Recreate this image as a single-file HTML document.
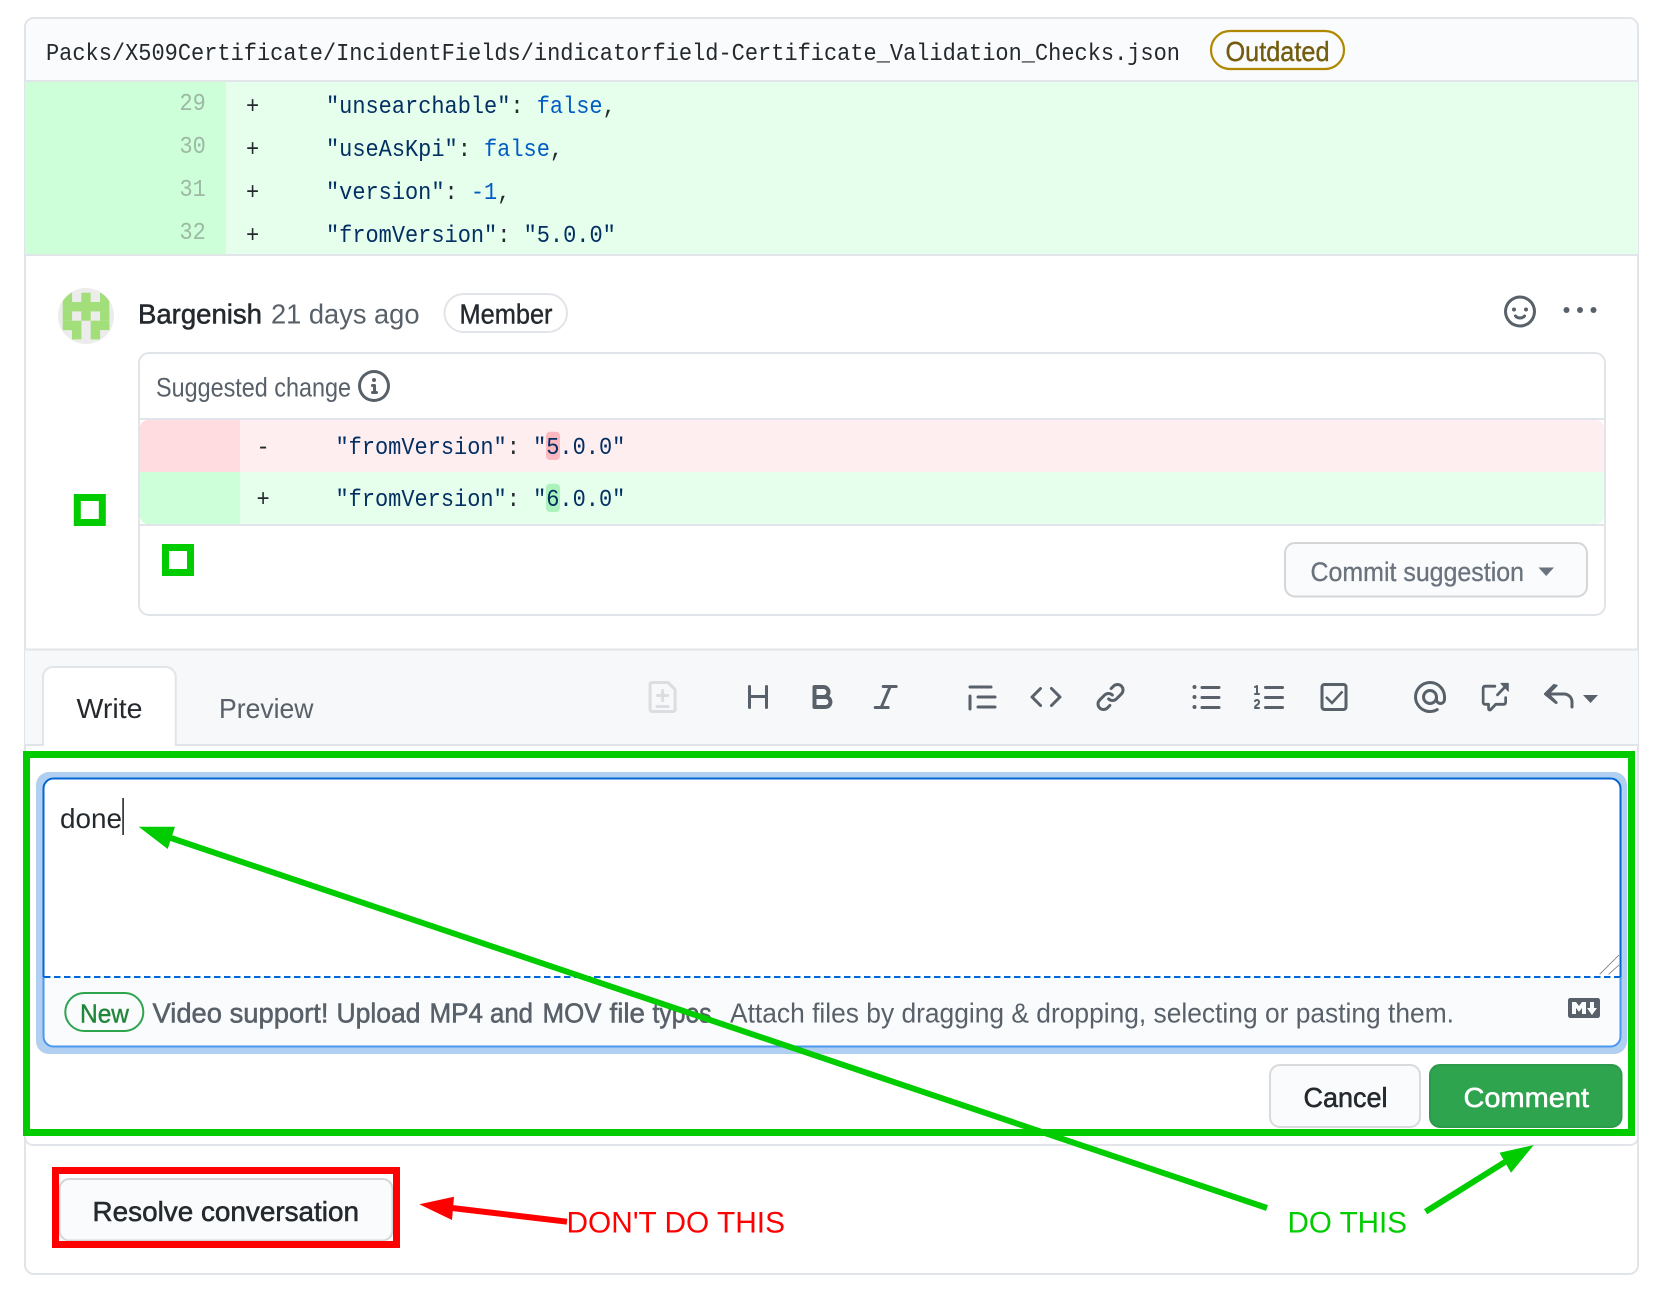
<!DOCTYPE html>
<html lang="en"><head><meta charset="utf-8"><title>Review comment</title>
<style>
html,body{margin:0;padding:0;background:#fff;width:1654px;height:1289px;overflow:hidden}
svg{display:block}
text{font-family:"Liberation Sans",Arial,sans-serif;font-size:28px;white-space:pre}
.m{font-family:"Liberation Mono",monospace;font-size:24px}
.k{fill:#032f62}.p{fill:#24292e}.b{fill:#005cc5}.n{fill:#9db8a4}
.s{stroke-width:.55px;paint-order:stroke}
</style></head><body>
<svg xmlns="http://www.w3.org/2000/svg" width="1654" height="1289" viewBox="0 0 1654 1289">
<rect width="1654" height="1289" fill="#fff"/>
<!-- outer card -->
<rect x="25" y="18" width="1613" height="1256" rx="9" fill="#fff" stroke="#e1e4e8" stroke-width="2"/>
<path d="M26 81V27a8 8 0 0 1 8-8H1629a8 8 0 0 1 8 8V81z" fill="#fafbfc"/>
<rect x="25" y="80" width="1613" height="2" fill="#e1e4e8"/>
<text class="m p" x="46" y="60" textLength="1134" lengthAdjust="spacingAndGlyphs">Packs/X509Certificate/IncidentFields/indicatorfield-Certificate_Validation_Checks.json</text>
<rect x="1211" y="31" width="133" height="38" rx="19" fill="none" stroke="#b08800" stroke-width="2.2"/>
<text class="s" x="1225.5" y="61" textLength="104" lengthAdjust="spacingAndGlyphs" fill="#735c0f" stroke="#735c0f" style="stroke-width:.4px">Outdated</text>

<!-- green code rows -->
<rect x="25" y="82" width="201" height="172" fill="#cdffd8"/>
<rect x="226" y="82" width="1412" height="172" fill="#e6ffed"/>
<rect x="25" y="254" width="1613" height="2" fill="#e1e4e8"/>
<text class="m n" x="179.500" y="110" textLength="26.3" lengthAdjust="spacingAndGlyphs">29</text>
<text class="m n" x="179.500" y="153" textLength="26.3" lengthAdjust="spacingAndGlyphs">30</text>
<text class="m n" x="179.500" y="196" textLength="26.3" lengthAdjust="spacingAndGlyphs">31</text>
<text class="m n" x="179.500" y="239" textLength="26.3" lengthAdjust="spacingAndGlyphs">32</text>
<text class="m p" x="246" y="113" textLength="13.2" lengthAdjust="spacingAndGlyphs">+</text>
<text class="m p" x="246" y="156" textLength="13.2" lengthAdjust="spacingAndGlyphs">+</text>
<text class="m p" x="246" y="199" textLength="13.2" lengthAdjust="spacingAndGlyphs">+</text>
<text class="m p" x="246" y="242" textLength="13.2" lengthAdjust="spacingAndGlyphs">+</text>
<text class="m k" x="326" y="113" textLength="184.4" lengthAdjust="spacingAndGlyphs">"unsearchable"</text>
<text class="m p" x="510.400" y="113" textLength="13.2" lengthAdjust="spacingAndGlyphs">:</text>
<text class="m b" x="536.700" y="113" textLength="65.9" lengthAdjust="spacingAndGlyphs">false</text>
<text class="m p" x="602.600" y="113" textLength="13.2" lengthAdjust="spacingAndGlyphs">,</text>
<text class="m k" x="326" y="156" textLength="131.7" lengthAdjust="spacingAndGlyphs">"useAsKpi"</text>
<text class="m p" x="457.700" y="156" textLength="13.2" lengthAdjust="spacingAndGlyphs">:</text>
<text class="m b" x="484" y="156" textLength="65.9" lengthAdjust="spacingAndGlyphs">false</text>
<text class="m p" x="549.900" y="156" textLength="13.2" lengthAdjust="spacingAndGlyphs">,</text>
<text class="m k" x="326" y="199" textLength="118.5" lengthAdjust="spacingAndGlyphs">"version"</text>
<text class="m p" x="444.500" y="199" textLength="13.2" lengthAdjust="spacingAndGlyphs">:</text>
<text class="m b" x="470.900" y="199" textLength="26.3" lengthAdjust="spacingAndGlyphs">-1</text>
<text class="m p" x="497.200" y="199" textLength="13.2" lengthAdjust="spacingAndGlyphs">,</text>
<text class="m k" x="326" y="242" textLength="171.2" lengthAdjust="spacingAndGlyphs">"fromVersion"</text>
<text class="m p" x="497.200" y="242" textLength="13.2" lengthAdjust="spacingAndGlyphs">:</text>
<text class="m k" x="523.600" y="242" textLength="92.2" lengthAdjust="spacingAndGlyphs">"5.0.0"</text>

<!-- author row -->
<circle cx="86" cy="316" r="28" fill="#ececec"/>
<clipPath id="av"><circle cx="86" cy="316" r="27.5"/></clipPath>
<g clip-path="url(#av)" fill="#a2de7a">
<rect x="62.7" y="292.7" width="9.4" height="9.4"/><rect x="81.3" y="292.7" width="9.4" height="9.4"/><rect x="100" y="292.7" width="9.4" height="9.4"/>
<rect x="62.7" y="302" width="46.6" height="9.4"/>
<rect x="62.7" y="311.3" width="9.4" height="9.4"/><rect x="81.3" y="311.3" width="9.4" height="9.4"/><rect x="100" y="311.3" width="9.4" height="9.4"/>
<rect x="62.7" y="320.7" width="18.7" height="9.4"/><rect x="90.7" y="320.7" width="18.7" height="9.4"/>
<rect x="72" y="330" width="9.4" height="9.4"/><rect x="90.7" y="330" width="9.4" height="9.4"/>
</g>
<text class="s" x="138" y="323.700" textLength="124" lengthAdjust="spacingAndGlyphs" fill="#24292e" stroke="#24292e">Bargenish</text>
<text x="271" y="323.700" textLength="148.5" lengthAdjust="spacingAndGlyphs" fill="#586069">21 days ago</text>
<rect x="444.500" y="294" width="122.500" height="38" rx="19" fill="#fff" stroke="#e1e4e8" stroke-width="2"/>
<text class="s" x="459.500" y="323.700" textLength="93" lengthAdjust="spacingAndGlyphs" fill="#24292e" stroke="#24292e" style="stroke-width:.4px">Member</text>
<path transform="translate(1504 295.500) scale(2)" fill="#586069" fill-rule="evenodd" d="M1.5 8a6.5 6.5 0 1113 0 6.5 6.5 0 01-13 0zM8 0a8 8 0 100 16A8 8 0 008 0zM5 8a1 1 0 100-2 1 1 0 000 2zm7-1a1 1 0 11-2 0 1 1 0 012 0zM5.32 9.636a.75.75 0 011.038.175l.007.009c.103.118.22.222.35.31.264.178.683.37 1.285.37.602 0 1.02-.192 1.285-.371.13-.088.247-.192.35-.31l.007-.008a.75.75 0 111.222.87l-.614-.431c.614.43.614.431.613.431v.001l-.001.002-.002.003-.005.007-.014.019a1.984 1.984 0 01-.184.213c-.16.166-.338.316-.53.445-.63.418-1.37.638-2.127.629-.946 0-1.652-.308-2.126-.63a3.32 3.32 0 01-.715-.657l-.014-.02-.005-.006-.002-.003v-.002h-.001l.613-.432-.614.43a.75.75 0 01.183-1.044h.001z"/>
<g fill="#586069"><circle cx="1566.500" cy="310" r="3"/><circle cx="1580" cy="310" r="3"/><circle cx="1593.500" cy="310" r="3"/></g>

<!-- suggested change -->
<rect x="139" y="353" width="1466" height="262" rx="10" fill="#fff" stroke="#e1e4e8" stroke-width="2"/>
<text x="156" y="396.500" textLength="195" lengthAdjust="spacingAndGlyphs" fill="#586069" style="font-size:26.5px">Suggested change</text>
<path transform="translate(358 370) scale(2)" fill="#586069" fill-rule="evenodd" d="M8 1.5a6.5 6.5 0 100 13 6.5 6.5 0 000-13zM0 8a8 8 0 1116 0A8 8 0 010 8zm6.5-.25A.75.75 0 017.25 7h1a.75.75 0 01.75.75v2.75h.25a.75.75 0 010 1.5h-2a.75.75 0 010-1.5h.25v-2h-.25a.75.75 0 01-.75-.75zM8 6a1 1 0 100-2 1 1 0 000 2z"/>
<rect x="139" y="418" width="1466" height="2" fill="#e1e4e8"/>
<path d="M140 472V428a8 8 0 0 1 8-8H240V472z" fill="#ffdce0"/>
<path d="M240 420H1596a8 8 0 0 1 8 8V472H240z" fill="#ffeef0"/>
<path d="M140 472H240V524H148a8 8 0 0 1-8-8z" fill="#cdffd8"/>
<path d="M240 472H1604V516a8 8 0 0 1-8 8H240z" fill="#e6ffed"/>
<rect x="139" y="524" width="1466" height="2" fill="#e1e4e8"/>
<rect x="546" y="431.7" width="14" height="28.3" rx="4" fill="#fdb8c0"/>
<rect x="546" y="483.7" width="14" height="28.3" rx="4" fill="#acf2bd"/>
<text class="m p" x="256.5" y="454" textLength="13.2" lengthAdjust="spacingAndGlyphs">-</text>
<text class="m k" x="335.5" y="454" textLength="171.2" lengthAdjust="spacingAndGlyphs">"fromVersion"</text>
<text class="m p" x="506.7" y="454" textLength="13.2" lengthAdjust="spacingAndGlyphs">:</text>
<text class="m k" x="533.1" y="454" textLength="92.2" lengthAdjust="spacingAndGlyphs">"5.0.0"</text>
<text class="m p" x="256.5" y="506" textLength="13.2" lengthAdjust="spacingAndGlyphs">+</text>
<text class="m k" x="335.5" y="506" textLength="171.2" lengthAdjust="spacingAndGlyphs">"fromVersion"</text>
<text class="m p" x="506.7" y="506" textLength="13.2" lengthAdjust="spacingAndGlyphs">:</text>
<text class="m k" x="533.1" y="506" textLength="92.2" lengthAdjust="spacingAndGlyphs">"6.0.0"</text>
<rect x="1285" y="543" width="302" height="53.500" rx="10" fill="#fafbfc" stroke="#d5d6d8" stroke-width="2"/>
<text class="s" x="1310.500" y="581" textLength="213.5" lengthAdjust="spacingAndGlyphs" fill="#6a737d" stroke="#6a737d" style="stroke-width:.3px;font-size:26.5px">Commit suggestion</text>
<path d="M1538.5 567.5H1554L1546.2 576z" fill="#6a737d"/>

<!-- toolbar -->
<rect x="25" y="650" width="1613" height="95" fill="#f6f8fa"/>
<rect x="25" y="648.5" width="1613" height="2" fill="#e1e4e8"/>
<rect x="25" y="744" width="1613" height="2" fill="#e1e4e8"/>
<path d="M43 746V677a10 10 0 0 1 10-10H165.7a10 10 0 0 1 10 10V746" fill="#fff" stroke="#e1e4e8" stroke-width="2"/>
<text x="76.5" y="717.8" textLength="66" lengthAdjust="spacingAndGlyphs" fill="#24292e">Write</text>
<text x="219" y="717.8" textLength="94.5" lengthAdjust="spacingAndGlyphs" fill="#586069">Preview</text>
<g fill="#586069" fill-rule="evenodd">
<path transform="translate(646.6 681) scale(2)" fill="#dcdde0" d="M2.75 1.5a.25.25 0 00-.25.25v12.5c0 .138.112.25.25.25h10.5a.25.25 0 00.25-.25V4.664a.25.25 0 00-.073-.177l-2.914-2.914a.25.25 0 00-.177-.073H2.75zM1 1.75C1 .784 1.784 0 2.75 0h7.586c.464 0 .909.184 1.237.513l2.914 2.914c.329.328.513.773.513 1.237v9.586A1.75 1.75 0 0113.25 16H2.75A1.75 1.75 0 011 14.25V1.75zM8 4a.75.75 0 01.75.75V6.5h1.75a.75.75 0 010 1.5H8.75v1.75a.75.75 0 01-1.5 0V8H5.5a.75.75 0 010-1.5h1.75V4.75A.75.75 0 018 4zM5.25 12a.75.75 0 000 1.5h5.5a.75.75 0 000-1.5h-5.5z"/>
<path transform="translate(742 681) scale(2)" d="M3.75 2a.75.75 0 01.75.75V7h7V2.75a.75.75 0 011.5 0v10.5a.75.75 0 01-1.5 0V8.5h-7v4.75a.75.75 0 01-1.5 0V2.75A.75.75 0 013.75 2z"/>
<path transform="translate(806.5 681) scale(2)" d="M4 2a1 1 0 00-1 1v10a1 1 0 001 1h5.5a3.5 3.5 0 001.852-6.47A3.5 3.5 0 008.5 2H4zm4.5 5a1.5 1.5 0 100-3H5v3h3.5zM5 9v3h4.5a1.5 1.5 0 000-3H5z"/>
<path transform="translate(869.7 681) scale(2)" d="M6 2.75A.75.75 0 016.75 2h6.5a.75.75 0 010 1.5h-2.505l-3.858 9H9.25a.75.75 0 010 1.5h-6.5a.75.75 0 010-1.5h2.505l3.858-9H6.75A.75.75 0 016 2.75z"/>
<path transform="translate(966.5 680.5) scale(2)" d="M1.75 2.5a.75.75 0 000 1.5h10.5a.75.75 0 000-1.5H1.75zm4 5a.75.75 0 000 1.5h8.5a.75.75 0 000-1.5h-8.5zm0 5a.75.75 0 000 1.5h8.5a.75.75 0 000-1.5h-8.5zM2.5 7.75a.75.75 0 00-1.5 0v6.5a.75.75 0 001.5 0v-6.5z"/>
<path transform="translate(1030 681) scale(2)" d="M4.72 3.22a.75.75 0 011.06 1.06L2.06 8l3.72 3.72a.75.75 0 11-1.06 1.06L.47 8.53a.75.75 0 010-1.06l4.25-4.25zm6.56 0a.75.75 0 10-1.06 1.06L13.94 8l-3.72 3.72a.75.75 0 101.06 1.06l4.25-4.25a.75.75 0 000-1.06l-4.25-4.25z"/>
<path transform="translate(1094.5 681) scale(2)" d="M7.775 3.275a.75.75 0 001.06 1.06l1.25-1.25a2 2 0 112.83 2.83l-2.5 2.5a2 2 0 01-2.83 0 .75.75 0 00-1.06 1.06 3.5 3.5 0 004.95 0l2.5-2.5a3.5 3.5 0 00-4.95-4.95l-1.25 1.25zm-4.69 9.64a2 2 0 010-2.83l2.5-2.5a2 2 0 012.83 0 .75.75 0 001.06-1.06 3.5 3.5 0 00-4.95 0l-2.5 2.5a3.5 3.5 0 004.95 4.95l1.25-1.25a.75.75 0 00-1.06-1.06l-1.25 1.25a2 2 0 01-2.83 0z"/>
<path transform="translate(1190.5 681) scale(2)" d="M2 4a1 1 0 100-2 1 1 0 000 2zm3.75-1.5a.75.75 0 000 1.5h8.5a.75.75 0 000-1.5h-8.5zm0 5a.75.75 0 000 1.5h8.5a.75.75 0 000-1.5h-8.5zm0 5a.75.75 0 000 1.5h8.5a.75.75 0 000-1.5h-8.5zM3 8a1 1 0 11-2 0 1 1 0 012 0zm-1 6a1 1 0 100-2 1 1 0 000 2z"/>
<path transform="translate(1254 681) scale(2)" d="M2.003 2.5a.5.5 0 00-.723-.447l-1.003.5a.5.5 0 00.446.895l.28-.14V6H.5a.5.5 0 000 1h2.006a.5.5 0 100-1h-.503V2.5zM5 3.25a.75.75 0 01.75-.75h8.5a.75.75 0 010 1.5h-8.5A.75.75 0 015 3.25zm0 5a.75.75 0 01.75-.75h8.5a.75.75 0 010 1.5h-8.5A.75.75 0 015 8.25zm0 5a.75.75 0 01.75-.75h8.5a.75.75 0 010 1.5h-8.5a.75.75 0 01-.75-.75zM.924 10.32l.003-.004a.851.851 0 01.144-.153A.66.66 0 011.5 10c.195 0 .306.068.374.146a.57.57 0 01.128.376c0 .453-.269.682-.8 1.078l-.035.025C.692 11.98 0 12.495 0 13.5a.5.5 0 00.5.5h2.003a.5.5 0 000-1H1.146c.132-.197.351-.372.654-.597l.047-.035c.47-.35 1.156-.858 1.156-1.845 0-.365-.118-.744-.377-1.038-.268-.303-.658-.484-1.126-.484-.48 0-.84.202-1.068.392a1.858 1.858 0 00-.348.384l-.007.011-.002.004-.001.002-.001.001a.5.5 0 00.851.525z"/>
<path transform="translate(1414 681) scale(2)" d="M4.75 2.37a6.5 6.5 0 006.5 11.26.75.75 0 01.75 1.298 8 8 0 113.994-7.273.754.754 0 01.006.095v1.5a2.75 2.75 0 01-5.072 1.475A4 4 0 1112 8v1.25a1.25 1.25 0 002.5 0V7.867a6.5 6.5 0 00-9.75-5.496V2.37zM10.5 8a2.5 2.5 0 10-5 0 2.5 2.5 0 005 0z"/>
<path transform="translate(1480 681) scale(1.8 1.9)" d="M16 1.25v4.146a.25.25 0 01-.427.177L14.03 4.03l-3.75 3.75a.75.75 0 11-1.06-1.06l3.75-3.75-1.543-1.543A.25.25 0 0111.604 1h4.146a.25.25 0 01.25.25zM2.75 3.5a.25.25 0 00-.25.25v7.5c0 .138.112.25.25.25h2a.75.75 0 01.75.75v2.19l2.72-2.72a.75.75 0 01.53-.22h4.5a.25.25 0 00.25-.25v-2.5a.75.75 0 111.5 0v2.5A1.75 1.75 0 0113.25 13H9.06l-2.573 2.573A1.457 1.457 0 014 14.543V13H2.75A1.75 1.75 0 011 11.25v-7.5C1 2.784 1.784 2 2.75 2h5.5a.75.75 0 010 1.5h-5.5z"/>
<path transform="translate(1543.5 680.5) scale(2)" d="M6.78 1.97a.75.75 0 010 1.06L3.81 6h6.44A4.75 4.75 0 0115 10.75v2.5a.75.75 0 01-1.5 0v-2.5a3.25 3.25 0 00-3.25-3.25H3.81l2.97 2.97a.75.75 0 11-1.06 1.06L.47 7.28a.75.75 0 010-1.06l4.25-4.25a.75.75 0 011.06 0z"/>
<path d="M1583 695H1598L1590.5 703z"/>
</g>
<rect x="1322" y="684.5" width="24" height="25" rx="2.5" fill="none" stroke="#586069" stroke-width="3"/>
<path d="M1326 697L1332 703L1342.5 691.5" fill="none" stroke="#586069" stroke-width="2.5"/>

<!-- comment form end -->
<path d="M25 1130v7a8 8 0 0 0 8 8H1630a8 8 0 0 0 8-8v-7" fill="none" stroke="#e1e4e8" stroke-width="2"/>

<!-- textarea -->
<rect x="36" y="772" width="1591" height="282" rx="13" fill="#b1cff0"/>
<path d="M43.5 977V788.5a10 10 0 0 1 10-10H1610.5a10 10 0 0 1 10 10V977z" fill="#fff"/>
<path d="M43.5 977V1036.5a10 10 0 0 0 10 10H1610.5a10 10 0 0 0 10-10V977z" fill="#fafbfc"/>
<path d="M43.5 977V788.5a10 10 0 0 1 10-10H1610.5a10 10 0 0 1 10 10V977" fill="none" stroke="#0366d6" stroke-width="2"/>
<path d="M43.5 977V1036.5a10 10 0 0 0 10 10H1610.5a10 10 0 0 0 10-10V977" fill="none" stroke="#4a97f0" stroke-width="2"/>
<line x1="44" y1="977" x2="1620" y2="977" stroke="#0366d6" stroke-width="2" stroke-dasharray="6.5 3.5"/>
<path d="M1599.7 974.3L1619 955M1608.6 974.3L1619 965" stroke="#777" stroke-width=".8" fill="none"/>
<text x="60" y="828" textLength="62" lengthAdjust="spacingAndGlyphs" fill="#24292e">done</text>
<rect x="122.3" y="798" width="1.6" height="37" fill="#24292e"/>
<rect x="65.3" y="993" width="78" height="38" rx="19" fill="none" stroke="#2ea44f" stroke-width="2"/>
<text class="s" x="80" y="1022.500" textLength="49" lengthAdjust="spacingAndGlyphs" fill="#22863a" stroke="#22863a" style="font-size:26px;stroke-width:.4px">New</text>
<g fill="#586069" stroke="#586069" class="s">
<text class="s" x="152.5" y="1022.500" textLength="176" lengthAdjust="spacingAndGlyphs">Video support!</text>
<text class="s" x="336.5" y="1022.500" textLength="84" lengthAdjust="spacingAndGlyphs">Upload</text>
<text class="s" x="429.500" y="1022.500" textLength="53.5" lengthAdjust="spacingAndGlyphs">MP4</text>
<text class="s" x="490" y="1022.500" textLength="43" lengthAdjust="spacingAndGlyphs">and</text>
<text class="s" x="542.500" y="1022.500" textLength="59" lengthAdjust="spacingAndGlyphs">MOV</text>
<text class="s" x="609.500" y="1022.500" textLength="35.5" lengthAdjust="spacingAndGlyphs">file</text>
<text class="s" x="652.500" y="1022.500" textLength="66" lengthAdjust="spacingAndGlyphs">types.</text>
</g>
<text x="730" y="1022.500" textLength="724" lengthAdjust="spacingAndGlyphs" fill="#586069">Attach files by dragging &amp; dropping, selecting or pasting them.</text>
<path transform="translate(1568 992) scale(2)" fill="#586069" fill-rule="evenodd" d="M14.85 3H1.15C.52 3 0 3.52 0 4.15v7.69C0 12.48.52 13 1.15 13h13.69c.64 0 1.15-.52 1.15-1.15v-7.7C16 3.52 15.48 3 14.85 3zM9 11H7V8L5.5 9.92 4 8v3H2V5h2l1.5 2L7 5h2v6zm2.99.5L9.5 8H11V5h2v3h1.5l-2.51 3.5z"/>

<!-- buttons -->
<rect x="1270" y="1065" width="150" height="62" rx="10" fill="#fafbfc" stroke="#d9dadb" stroke-width="2"/>
<text class="s" x="1303.500" y="1107.200" textLength="84" lengthAdjust="spacingAndGlyphs" fill="#24292e" stroke="#24292e">Cancel</text>
<rect x="1430" y="1065" width="191.500" height="62" rx="10" fill="#2ea44f" stroke="#2c9a4b" stroke-width="2"/>
<text class="s" x="1463.500" y="1107.200" textLength="125.500" lengthAdjust="spacingAndGlyphs" fill="#fff" stroke="#fff">Comment</text>
<rect x="59.500" y="1179" width="333" height="61.500" rx="10" fill="#fafbfc" stroke="#d5d6d8" stroke-width="2"/>
<text class="s" x="92.500" y="1221.200" textLength="266.500" lengthAdjust="spacingAndGlyphs" fill="#24292e" stroke="#24292e">Resolve conversation</text>

<!-- annotations -->
<rect x="77.300" y="497.500" width="25" height="25" fill="#fff" stroke="#00cc00" stroke-width="7"/>
<rect x="165.500" y="547.500" width="25" height="25" fill="#fff" stroke="#00cc00" stroke-width="7"/>
<rect x="26.500" y="754.500" width="1605" height="378" fill="none" stroke="#00cc00" stroke-width="7"/>
<rect x="55.500" y="1170.500" width="341" height="74" fill="none" stroke="#ff0000" stroke-width="7"/>
<line x1="171" y1="838" x2="1267" y2="1208" stroke="#00cc00" stroke-width="6"/>
<polygon points="138.700,826.700 175,826.700 167.700,849" fill="#00cc00"/>
<line x1="1425.600" y1="1211.700" x2="1505" y2="1162" stroke="#00cc00" stroke-width="6"/>
<polygon points="1533.800,1145 1499.500,1152.700 1511,1172.700" fill="#00cc00"/>
<line x1="452" y1="1208" x2="567" y2="1221.700" stroke="#ff0000" stroke-width="6"/>
<polygon points="419.300,1204.300 454,1196.700 452,1220" fill="#ff0000"/>
<text x="566.500" y="1232.700" textLength="218.500" lengthAdjust="spacingAndGlyphs" fill="#ff0000" style="font-size:30px">DON'T DO THIS</text>
<text x="1287.500" y="1232.700" textLength="119.500" lengthAdjust="spacingAndGlyphs" fill="#00cc00" style="font-size:30px">DO THIS</text>
</svg>
</body></html>
